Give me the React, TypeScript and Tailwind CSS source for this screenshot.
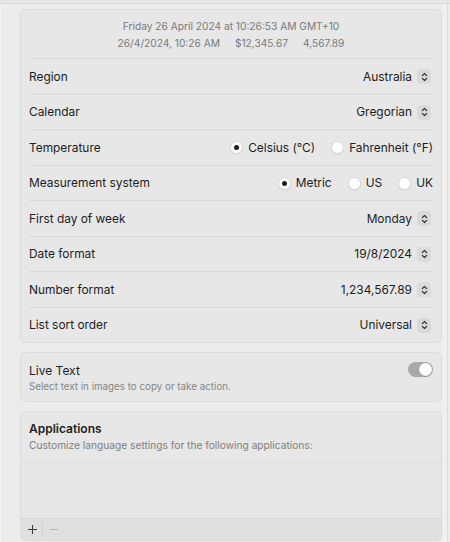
import React from 'react';

type Row =
  | { label: string; kind: 'select'; value: string }
  | { label: string; kind: 'radio'; options: string[]; selected: number };

const rows: Row[] = [
  { label: 'Region', kind: 'select', value: 'Australia' },
  { label: 'Calendar', kind: 'select', value: 'Gregorian' },
  { label: 'Temperature', kind: 'radio', options: ['Celsius (°C)', 'Fahrenheit (°F)'], selected: 0 },
  { label: 'Measurement system', kind: 'radio', options: ['Metric', 'US', 'UK'], selected: 0 },
  { label: 'First day of week', kind: 'select', value: 'Monday' },
  { label: 'Date format', kind: 'select', value: '19/8/2024' },
  { label: 'Number format', kind: 'select', value: '1,234,567.89' },
  { label: 'List sort order', kind: 'select', value: 'Universal' },
];

const Stepper = () => (
  <span className="w-[14px] h-[15px] rounded-[4px] bg-[#dadada] flex items-center justify-center">
    <svg width="7" height="10" viewBox="0 0 7 10" fill="none" stroke="#333" strokeWidth="1.2" strokeLinecap="round" strokeLinejoin="round">
      <path d="M1.3 3.7 L3.5 1.5 L5.7 3.7" />
      <path d="M1.3 6.3 L3.5 8.5 L5.7 6.3" />
    </svg>
  </span>
);

const Radio = ({ on }: { on: boolean }) => (
  <span className="w-[13px] h-[13px] rounded-full bg-white border border-[#dadada] shadow-[0_0.5px_1px_rgba(0,0,0,0.1)] flex items-center justify-center">
    {on && <span className="w-[5px] h-[5px] rounded-full bg-[#1f1f1f]" />}
  </span>
);

export default function App() {
  return (
    <div className="w-[450px] h-[542px] bg-[#ececec] flex flex-col overflow-hidden text-[#1e1e1e] font-['Inter','Noto_Sans',sans-serif]">
      <div className="h-[4px] bg-[#e6e6e6] border-b border-[#dadada] shrink-0" />
      <div className="flex flex-1 min-h-0">
        <div className="w-[1px] bg-[#f4f4f4]" />
        <div className="flex-1 pl-[19px] pr-[1px] pt-[5px] flex flex-col gap-[9px]">
          {/* Format card */}
          <div className="rounded-[6px] border border-[#dcdcdc] bg-[#e7e7e7] px-2">
            <div className="h-[48px] flex flex-col items-center pt-[8px] text-[10.2px] leading-[17px] text-[#7a7a7a]">
              <div>Friday 26 April 2024 at 10:26:53 AM GMT+10</div>
              <div className="flex gap-[15px]">
                <span>26/4/2024, 10:26 AM</span>
                <span>$12,345.67</span>
                <span>4,567.89</span>
              </div>
            </div>
            {rows.map((r) => (
              <div key={r.label} className="h-[35.5px] pt-[1px] border-t border-[#d9d9d9] flex items-center justify-between text-[11.9px]">
                <span>{r.label}</span>
                {r.kind === 'select' ? (
                  <span className="flex items-center gap-[5px] pr-[2px]">
                    <span>{r.value}</span>
                    <Stepper />
                  </span>
                ) : (
                  <span className="flex items-center gap-[16px]">
                    {r.options.map((o, i) => (
                      <span key={o} className="flex items-center gap-[5px]">
                        <Radio on={i === r.selected} />
                        <span>{o}</span>
                      </span>
                    ))}
                  </span>
                )}
              </div>
            ))}
          </div>

          {/* Live Text */}
          <div className="h-[50px] rounded-[6px] border border-[#dcdcdc] bg-[#e7e7e7] px-2 flex items-center justify-between">
            <div className="flex flex-col pt-[1px]">
              <span className="text-[12px] leading-[17px]">Live Text</span>
              <span className="text-[9.8px] leading-[15px] text-[#858585]">Select text in images to copy or take action.</span>
            </div>
            <div className="w-[25px] h-[15px] rounded-full bg-[#a9a9a9] flex items-center justify-end px-[1px] -mt-[16px]">
              <span className="w-[13px] h-[13px] rounded-full bg-white shadow-[0_0.5px_1px_rgba(0,0,0,0.3)]" />
            </div>
          </div>

          {/* Applications */}
          <div className="h-[130px] rounded-[6px] border border-[#dcdcdc] bg-[#e7e7e7] flex flex-col overflow-hidden">
            <div className="h-[51px] px-2 pt-[8px] flex flex-col border-b border-[#dddddd]">
              <span className="text-[12px] leading-[17px] font-semibold">Applications</span>
              <span className="text-[10.2px] leading-[17px] text-[#808080]">Customize language settings for the following applications:</span>
            </div>
            <div className="flex-1" />
            <div className="h-[22px] border-t border-[#d6d6d6] bg-[#e0e0e0] flex items-center">
              <span className="w-[20px] ml-[1px] flex justify-center">
                <svg width="9" height="9" viewBox="0 0 9 9" stroke="#3a3a3a" strokeWidth="1.1">
                  <path d="M4.5 0 V9 M0 4.5 H9" />
                </svg>
              </span>
              <span className="w-[1px] h-[14px] bg-[#d0d0d0]" />
              <span className="w-[22px] flex justify-center">
                <svg width="8" height="9" viewBox="0 0 8 9" stroke="#b5b5b5" strokeWidth="1.1">
                  <path d="M0 4.5 H8" />
                </svg>
              </span>
            </div>
          </div>
        </div>
        <div className="w-[7px] flex">
          <div className="w-[4px] bg-[#f0f0f0]" />
          <div className="w-[1px] bg-[#dcdcdc]" />
          <div className="flex-1 bg-[#ececec]" />
        </div>
      </div>
    </div>
  );
}
